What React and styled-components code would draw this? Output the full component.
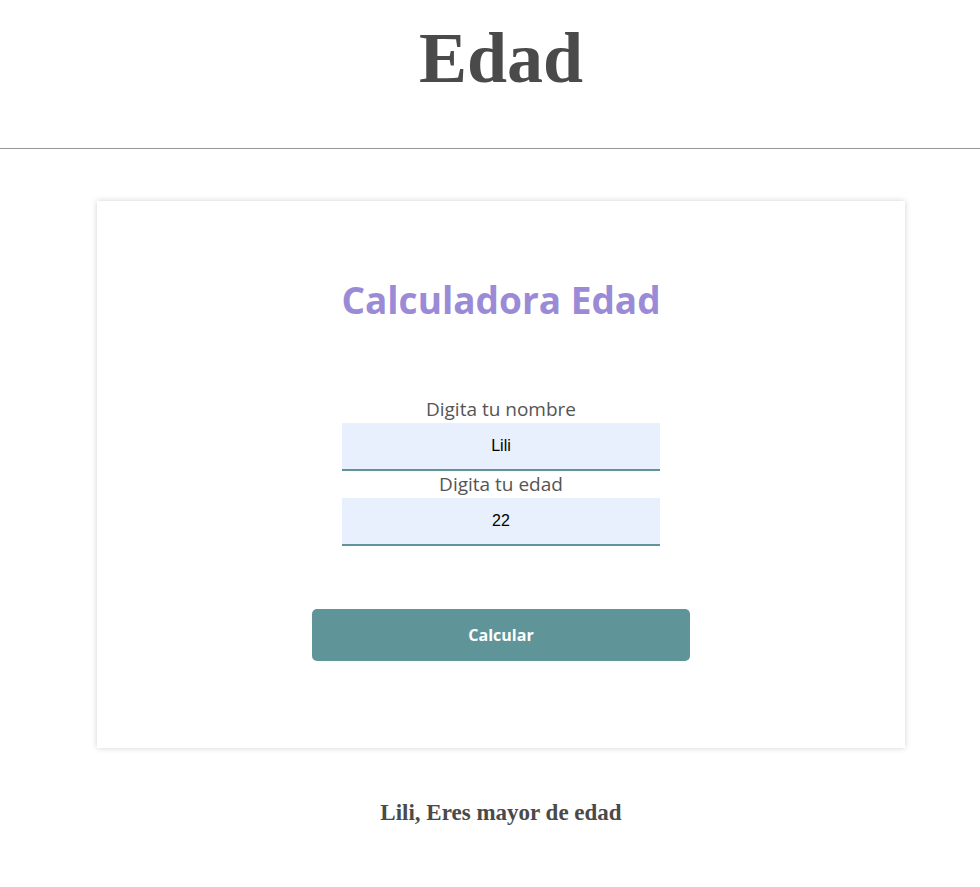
import React, { useState } from 'react'
import styled, { createGlobalStyle } from 'styled-components';

const GlobalStyle = createGlobalStyle`
    body {
        margin: 0;
        background: #ffffff;
        font-family: "Liberation Serif", "Times New Roman", serif;
    }
`

export default function App() {
    const [nombre, setNombre] = useState('Lili')
    const [edad, setEdad] = useState('22')

    return (
        <>
            <GlobalStyle />
            <Header>
                <Title>Edad</Title>
            </Header>
            <Main>
                <Card>
                    <CardTitle>Calculadora Edad</CardTitle>
                    <Form>
                        <Label htmlFor='nombre'>Digita tu nombre</Label>
                        <Input id='nombre' value={nombre} onChange={e => setNombre(e.target.value)} />
                        <Label htmlFor='edad'>Digita tu edad</Label>
                        <Input id='edad' value={edad} onChange={e => setEdad(e.target.value)} />
                    </Form>
                    <Button>Calcular</Button>
                </Card>
                <Result>{nombre}, Eres mayor de edad</Result>
            </Main>
        </>
    )
}

const Header = styled.header`
    display: flex;
    justify-content: center;
    align-items: center;
    height: 148px;
    padding-left: 22px;
    border-bottom: 1px solid #999999;
`

const Title = styled.h1`
    margin: 0;
    font-family: "Liberation Serif", "Times New Roman", serif;
    font-size: 72px;
    font-weight: bold;
    color: #4a4a4a;
    line-height: 1;
    padding-bottom: 32px;
`

const Main = styled.main`
    display: flex;
    flex-direction: column;
    align-items: center;
    padding: 52px 0 0 22px;
`

const Card = styled.section`
    display: flex;
    flex-direction: column;
    align-items: center;
    box-sizing: border-box;
    width: 808px;
    height: 547px;
    padding-top: 76px;
    background: #ffffff;
    box-shadow: 0 0 6px rgba(0, 0, 0, 0.18);
`

const CardTitle = styled.h2`
    margin: 0;
    font-family: "Open Sans", sans-serif;
    font-size: 37px;
    font-weight: bold;
    color: #9b8bd7;
    line-height: 46px;
`

const Form = styled.div`
    display: flex;
    flex-direction: column;
    align-items: center;
    margin-top: 73px;
`

const Label = styled.label`
    font-family: "Open Sans", sans-serif;
    font-size: 19px;
    color: #555555;
    line-height: 27px;
`

const Input = styled.input`
    box-sizing: border-box;
    width: 318px;
    height: 48px;
    border: none;
    border-bottom: 2px solid #5f9598;
    background: #e8f0fe;
    text-align: center;
    font-family: "Liberation Sans", Arial, sans-serif;
    font-size: 16px;
    color: #000000;
    outline: none;
`

const Button = styled.button`
    width: 378px;
    height: 52px;
    margin-top: 63px;
    border: none;
    border-radius: 5px;
    background: #5f9598;
    color: #ffffff;
    font-family: "Open Sans", sans-serif;
    font-size: 16px;
    font-weight: bold;
    cursor: pointer;
`

const Result = styled.p`
    margin: 52px 0 0;
    font-family: "Liberation Serif", "Times New Roman", serif;
    font-size: 23px;
    font-weight: bold;
    color: #4a4a4a;
`
